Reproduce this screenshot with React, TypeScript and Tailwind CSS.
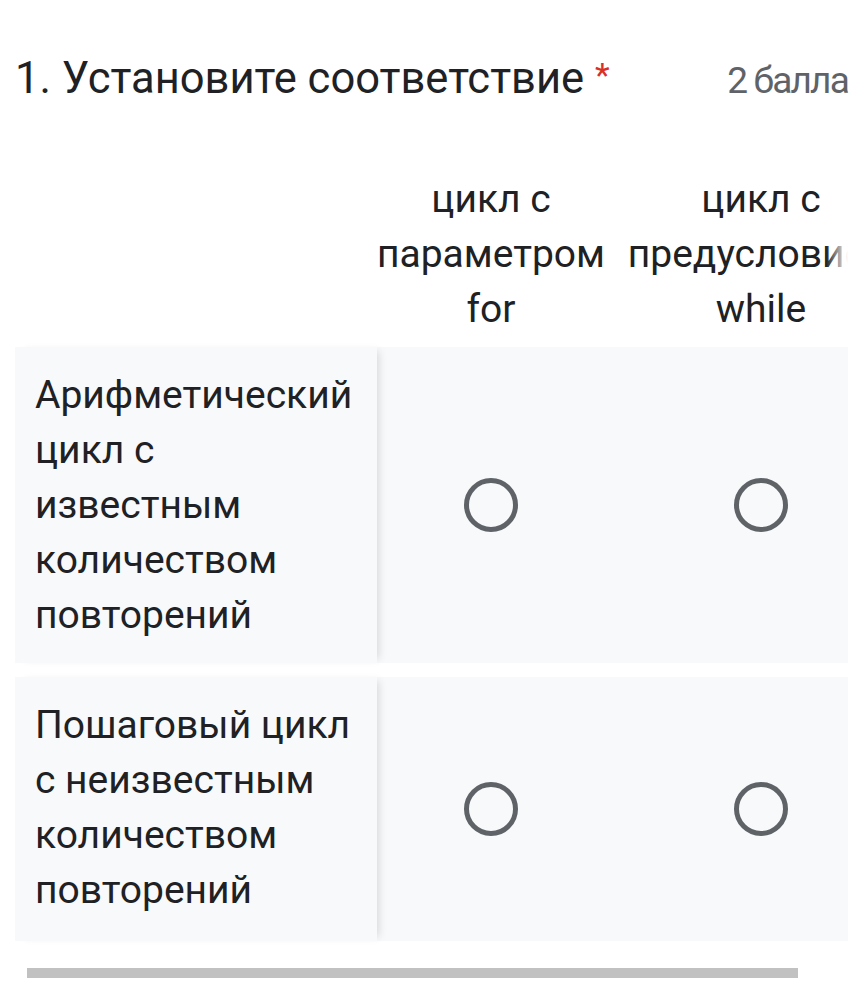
const columns = [
  ["цикл с", "параметром", "for"],
  ["цикл с", "предусловием", "while"],
];

const rows = [
  ["Арифметический", "цикл с", "известным", "количеством", "повторений"],
  ["Пошаговый цикл", "с неизвестным", "количеством", "повторений"],
];

const Radio = () => (
  <div className="w-[54px] h-[54px] rounded-full border-[5px] border-[#5f6368]" />
);

export default function App() {
  return (
    <div className="w-[864px] h-[1005px] bg-white overflow-hidden text-[#202124] font-['Roboto',sans-serif]">
      <div className="flex items-baseline justify-between pl-[15px] pr-[16px] mt-[52px]">
        <h1 className="text-[43.5px] leading-[53px] font-normal">
          1. Установите соответствие{" "}
          <span className="inline-block align-top mt-[6px] text-[34px] leading-none text-[#d93025]">*</span>
        </h1>
        <span className="text-[37px] tracking-[-1.8px] text-[#5f6368]">2 балла</span>
      </div>

      <div className="ml-[15px] mr-[16px] mt-[63px]">
        {/* column headers */}
        <div className="flex">
          <div className="w-[362px] shrink-0 bg-white" />
          <div className="relative flex-1 overflow-hidden">
            <div className="flex -ml-[21px]">
              {columns.map((lines, i) => (
                <div
                  key={i}
                  className="w-[270px] shrink-0 text-center text-[39px] leading-[55px] whitespace-nowrap"
                >
                  {lines.map((l) => (
                    <div key={l}>{l}</div>
                  ))}
                </div>
              ))}
            </div>
            <div className="absolute right-0 top-0 h-full w-[22px] bg-gradient-to-r from-transparent to-white" />
          </div>
        </div>

        {/* rows */}
        <div className="mt-[10px] flex flex-col gap-[14px]">
          {rows.map((lines, r) => (
            <div key={r} className="flex bg-[#f8f9fa]">
              <div
                className={`relative z-10 w-[362px] shrink-0 bg-[#f8f9fa] px-[20px] pt-[21px] ${
                  r === 0 ? "pb-[20px]" : "pb-[23px]"
                } text-[39px] leading-[55px] whitespace-nowrap shadow-[6px_0_8px_-4px_rgba(0,0,0,0.13)]`}
              >
                {lines.map((l) => (
                  <div key={l}>{l}</div>
                ))}
              </div>
              <div className="flex-1 overflow-hidden">
                <div className="flex h-full -ml-[21px]">
                  {columns.map((_, c) => (
                    <div
                      key={c}
                      className="w-[270px] shrink-0 flex items-center justify-center"
                    >
                      <Radio />
                    </div>
                  ))}
                </div>
              </div>
            </div>
          ))}
        </div>
      </div>

      <div className="ml-[27px] mt-[27px] w-[771px] h-[10px] bg-[#c1c1c1]" />
    </div>
  );
}
